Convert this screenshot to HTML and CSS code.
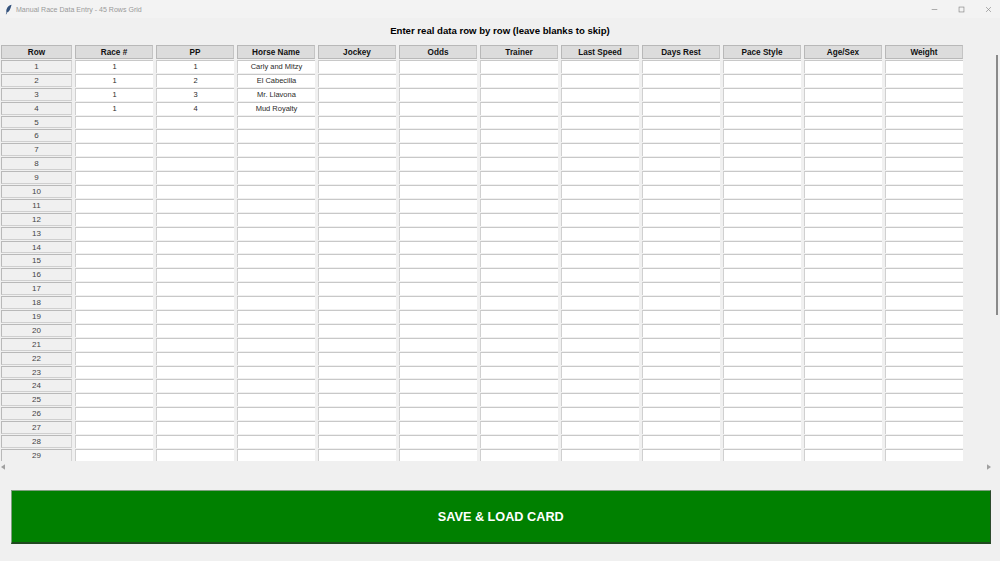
FILE: index.html
```html
<!DOCTYPE html>
<html lang="en">
<head>
<meta charset="utf-8">
<title>Manual Race Data Entry - 45 Rows Grid</title>
<link rel="stylesheet" href="styles.css">
</head>
<body>
<div class="window">
<header class="titlebar">
<svg class="feather" viewBox="0 0 8 12"><path d="M7.5.5C5 1 2.5 3 1.6 6.2 1.3 7.6 1.4 8.6 1.7 9.2L.9 11.3l.7.2.8-2C4.6 9 6.3 5.500 7.500.5z"/></svg>
<span class="title">Manual Race Data Entry - 45 Rows Grid</span>
<div class="controls">
<svg viewBox="0 0 10 10"><path d="M1 5h8"/></svg>
<svg viewBox="0 0 10 10"><rect x="1.500" y="1.500" width="7" height="7"/></svg>
<svg viewBox="0 0 10 10"><path d="M1.500 1.500l7 7M8.500 1.500l-7 7"/></svg>
</div>
</header>
<h1 class="heading">Enter real data row by row (leave blanks to skip)</h1>
<div class="scroller">
<div class="grid">
<div class="head">Row</div><div class="head">Race #</div><div class="head">PP</div><div class="head">Horse Name</div><div class="head">Jockey</div><div class="head">Odds</div><div class="head">Trainer</div><div class="head">Last Speed</div><div class="head">Days Rest</div><div class="head">Pace Style</div><div class="head">Age/Sex</div><div class="head">Weight</div>
<div class="num">1</div><div class="cell">1</div><div class="cell">1</div><div class="cell">Carly and Mitzy</div><div class="cell"></div><div class="cell"></div><div class="cell"></div><div class="cell"></div><div class="cell"></div><div class="cell"></div><div class="cell"></div><div class="cell"></div>
<div class="num">2</div><div class="cell">1</div><div class="cell">2</div><div class="cell">El Cabecilla</div><div class="cell"></div><div class="cell"></div><div class="cell"></div><div class="cell"></div><div class="cell"></div><div class="cell"></div><div class="cell"></div><div class="cell"></div>
<div class="num">3</div><div class="cell">1</div><div class="cell">3</div><div class="cell">Mr. Llavona</div><div class="cell"></div><div class="cell"></div><div class="cell"></div><div class="cell"></div><div class="cell"></div><div class="cell"></div><div class="cell"></div><div class="cell"></div>
<div class="num">4</div><div class="cell">1</div><div class="cell">4</div><div class="cell">Mud Royalty</div><div class="cell"></div><div class="cell"></div><div class="cell"></div><div class="cell"></div><div class="cell"></div><div class="cell"></div><div class="cell"></div><div class="cell"></div>
<div class="num">5</div><div class="cell"></div><div class="cell"></div><div class="cell"></div><div class="cell"></div><div class="cell"></div><div class="cell"></div><div class="cell"></div><div class="cell"></div><div class="cell"></div><div class="cell"></div><div class="cell"></div>
<div class="num">6</div><div class="cell"></div><div class="cell"></div><div class="cell"></div><div class="cell"></div><div class="cell"></div><div class="cell"></div><div class="cell"></div><div class="cell"></div><div class="cell"></div><div class="cell"></div><div class="cell"></div>
<div class="num">7</div><div class="cell"></div><div class="cell"></div><div class="cell"></div><div class="cell"></div><div class="cell"></div><div class="cell"></div><div class="cell"></div><div class="cell"></div><div class="cell"></div><div class="cell"></div><div class="cell"></div>
<div class="num">8</div><div class="cell"></div><div class="cell"></div><div class="cell"></div><div class="cell"></div><div class="cell"></div><div class="cell"></div><div class="cell"></div><div class="cell"></div><div class="cell"></div><div class="cell"></div><div class="cell"></div>
<div class="num">9</div><div class="cell"></div><div class="cell"></div><div class="cell"></div><div class="cell"></div><div class="cell"></div><div class="cell"></div><div class="cell"></div><div class="cell"></div><div class="cell"></div><div class="cell"></div><div class="cell"></div>
<div class="num">10</div><div class="cell"></div><div class="cell"></div><div class="cell"></div><div class="cell"></div><div class="cell"></div><div class="cell"></div><div class="cell"></div><div class="cell"></div><div class="cell"></div><div class="cell"></div><div class="cell"></div>
<div class="num">11</div><div class="cell"></div><div class="cell"></div><div class="cell"></div><div class="cell"></div><div class="cell"></div><div class="cell"></div><div class="cell"></div><div class="cell"></div><div class="cell"></div><div class="cell"></div><div class="cell"></div>
<div class="num">12</div><div class="cell"></div><div class="cell"></div><div class="cell"></div><div class="cell"></div><div class="cell"></div><div class="cell"></div><div class="cell"></div><div class="cell"></div><div class="cell"></div><div class="cell"></div><div class="cell"></div>
<div class="num">13</div><div class="cell"></div><div class="cell"></div><div class="cell"></div><div class="cell"></div><div class="cell"></div><div class="cell"></div><div class="cell"></div><div class="cell"></div><div class="cell"></div><div class="cell"></div><div class="cell"></div>
<div class="num">14</div><div class="cell"></div><div class="cell"></div><div class="cell"></div><div class="cell"></div><div class="cell"></div><div class="cell"></div><div class="cell"></div><div class="cell"></div><div class="cell"></div><div class="cell"></div><div class="cell"></div>
<div class="num">15</div><div class="cell"></div><div class="cell"></div><div class="cell"></div><div class="cell"></div><div class="cell"></div><div class="cell"></div><div class="cell"></div><div class="cell"></div><div class="cell"></div><div class="cell"></div><div class="cell"></div>
<div class="num">16</div><div class="cell"></div><div class="cell"></div><div class="cell"></div><div class="cell"></div><div class="cell"></div><div class="cell"></div><div class="cell"></div><div class="cell"></div><div class="cell"></div><div class="cell"></div><div class="cell"></div>
<div class="num">17</div><div class="cell"></div><div class="cell"></div><div class="cell"></div><div class="cell"></div><div class="cell"></div><div class="cell"></div><div class="cell"></div><div class="cell"></div><div class="cell"></div><div class="cell"></div><div class="cell"></div>
<div class="num">18</div><div class="cell"></div><div class="cell"></div><div class="cell"></div><div class="cell"></div><div class="cell"></div><div class="cell"></div><div class="cell"></div><div class="cell"></div><div class="cell"></div><div class="cell"></div><div class="cell"></div>
<div class="num">19</div><div class="cell"></div><div class="cell"></div><div class="cell"></div><div class="cell"></div><div class="cell"></div><div class="cell"></div><div class="cell"></div><div class="cell"></div><div class="cell"></div><div class="cell"></div><div class="cell"></div>
<div class="num">20</div><div class="cell"></div><div class="cell"></div><div class="cell"></div><div class="cell"></div><div class="cell"></div><div class="cell"></div><div class="cell"></div><div class="cell"></div><div class="cell"></div><div class="cell"></div><div class="cell"></div>
<div class="num">21</div><div class="cell"></div><div class="cell"></div><div class="cell"></div><div class="cell"></div><div class="cell"></div><div class="cell"></div><div class="cell"></div><div class="cell"></div><div class="cell"></div><div class="cell"></div><div class="cell"></div>
<div class="num">22</div><div class="cell"></div><div class="cell"></div><div class="cell"></div><div class="cell"></div><div class="cell"></div><div class="cell"></div><div class="cell"></div><div class="cell"></div><div class="cell"></div><div class="cell"></div><div class="cell"></div>
<div class="num">23</div><div class="cell"></div><div class="cell"></div><div class="cell"></div><div class="cell"></div><div class="cell"></div><div class="cell"></div><div class="cell"></div><div class="cell"></div><div class="cell"></div><div class="cell"></div><div class="cell"></div>
<div class="num">24</div><div class="cell"></div><div class="cell"></div><div class="cell"></div><div class="cell"></div><div class="cell"></div><div class="cell"></div><div class="cell"></div><div class="cell"></div><div class="cell"></div><div class="cell"></div><div class="cell"></div>
<div class="num">25</div><div class="cell"></div><div class="cell"></div><div class="cell"></div><div class="cell"></div><div class="cell"></div><div class="cell"></div><div class="cell"></div><div class="cell"></div><div class="cell"></div><div class="cell"></div><div class="cell"></div>
<div class="num">26</div><div class="cell"></div><div class="cell"></div><div class="cell"></div><div class="cell"></div><div class="cell"></div><div class="cell"></div><div class="cell"></div><div class="cell"></div><div class="cell"></div><div class="cell"></div><div class="cell"></div>
<div class="num">27</div><div class="cell"></div><div class="cell"></div><div class="cell"></div><div class="cell"></div><div class="cell"></div><div class="cell"></div><div class="cell"></div><div class="cell"></div><div class="cell"></div><div class="cell"></div><div class="cell"></div>
<div class="num">28</div><div class="cell"></div><div class="cell"></div><div class="cell"></div><div class="cell"></div><div class="cell"></div><div class="cell"></div><div class="cell"></div><div class="cell"></div><div class="cell"></div><div class="cell"></div><div class="cell"></div>
<div class="num">29</div><div class="cell"></div><div class="cell"></div><div class="cell"></div><div class="cell"></div><div class="cell"></div><div class="cell"></div><div class="cell"></div><div class="cell"></div><div class="cell"></div><div class="cell"></div><div class="cell"></div>
</div>
<div class="vbar"><div class="vthumb"></div></div>
</div>
<div class="hbar">
<svg viewBox="0 0 5 7"><path d="M5 0v7L0 3.500z"/></svg>
<svg viewBox="0 0 5 7"><path d="M0 0v7l5-3.500z"/></svg>
</div>
<div class="action"><button class="save">SAVE &amp; LOAD CARD</button></div>
</div>
</body>
</html>
```
FILE: styles.css
```css
* { box-sizing: border-box; }
html, body { margin: 0; height: 100%; overflow: hidden; }
body { background: #f0f0f0; font-family: "Liberation Sans", Arial, sans-serif; }
.window { display: flex; flex-direction: column; width: 1000px; height: 561px; }

.titlebar { display: flex; align-items: center; height: 18px; background: #f3f3f3; padding-left: 5px; flex: none; }
.feather { width: 7px; height: 11px; fill: #34527c; }
.title { margin-left: 4px; font-size: 7.050px; color: #9a9a9a; }
.controls { margin-left: auto; display: flex; gap: 20px; padding-right: 8px; }
.controls svg { width: 7px; height: 7px; fill: none; stroke: #8c8c8c; stroke-width: 1; }

.heading { margin: 0; height: 27px; line-height: 25px; font-size: 9.600px; font-weight: bold; text-align: center; color: #000; flex: none; }

.scroller { display: flex; height: 416px; flex: none; overflow: hidden; }
.grid { display: grid; grid-template-columns: 71px repeat(11, 78px); grid-template-rows: 14px; grid-auto-rows: 12.900px; column-gap: 3px; row-gap: 1px; padding-left: 1px; width: 964px; align-content: start; background: #f0f0f0; flex: none; }
.grid > div { display: flex; align-items: center; justify-content: center; font-size: 7.500px; color: #2a2a2a; overflow: hidden; white-space: nowrap; }
.grid > .head { background: #dcdcdc; border: 1px solid #b8b8b8; border-right-color: #c4c4c4; font-size: 8.200px; font-weight: bold; color: #111; }
.grid > .num { background: #f0f0f0; border: 1px solid #b9b9b9; border-right-color: #d4d4d4; border-bottom-color: #cfcfcf; font-size: 8px; color: #444; }
.grid > .cell { background: #fff; border-top: 1px solid #c8c8c8; border-left: 1px solid #d0d0d0; }

.vbar { flex: 1; position: relative; }
.vthumb { position: absolute; left: 32px; top: 10px; width: 2px; height: 260px; background: #8a8a8a; }

.hbar { display: flex; justify-content: space-between; align-items: center; height: 12px; padding: 0 9px 0 1px; flex: none; }
.hbar svg { width: 4px; height: 6px; fill: #a0a0a0; }

.action { padding: 17px 9px 0 10.500px; flex: none; }
.save { display: block; width: 100%; height: 54px; border: 1px solid #7f9f7f; border-right-color: #2c4a2c; border-bottom: 2px solid #1f4a1f; background: #008000; color: #fff; font-family: inherit; font-size: 12.700px; font-weight: bold; padding: 0; }
```
